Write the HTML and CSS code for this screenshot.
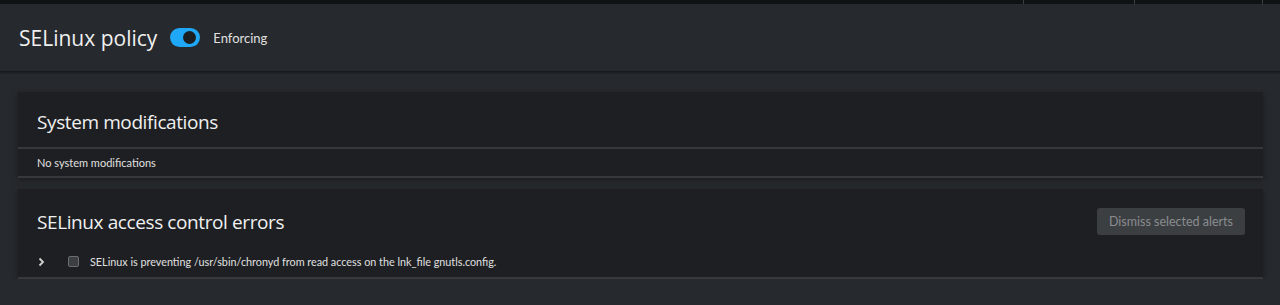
FILE: index.html
```html
<!DOCTYPE html>
<html lang="en">
<head>
  <meta charset="UTF-8" />
  <title>SELinux</title>
  <link rel="stylesheet" href="styles.css">
</head>
<body>

  <div class="topbar">
    <div class="top-fill"></div>
    <div class="top-item w110"></div>
    <div class="top-item w128"></div>
    <div class="top-item w18"></div>
  </div>

  <header class="page-header">
    <h1>SELinux policy</h1>
    <span class="switch"><span class="knob"></span></span>
    <span class="switch-label">Enforcing</span>
  </header>

  <main class="content">
    <section class="card">
      <div class="card-head bordered">
        <h2>System modifications</h2>
      </div>
      <div class="row plain">No system modifications</div>
    </section>

    <section class="card">
      <div class="card-head tall">
        <h2>SELinux access control errors</h2>
        <button class="btn-dismiss">Dismiss selected alerts</button>
      </div>
      <div class="row alert-row">
        <svg class="chevron" width="8" height="10" viewBox="0 0 8 10">
          <path d="M2.5 1.5 L6 5 L2.5 8.5" fill="none" stroke="#d2d2d2" stroke-width="1.8" />
        </svg>
        <span class="check"></span>
        <span class="alert-text">SELinux is preventing /usr/sbin/chronyd from read access on the lnk_file gnutls.config.</span>
      </div>
    </section>
  </main>

</body>
</html>
```

FILE: styles.css
```css
body { margin: 0; background-color: #26292d; color: #e0e0e0; font-family: "Open Sans", "Noto Sans", sans-serif; }

.topbar { display: flex; height: 4px; background-color: #0f1214; }
.top-fill { flex: 1; }
.top-item { border-left: 1px solid #3c3f42; }
.w110 { width: 110px; }
.w128 { width: 127px; }
.w18 { width: 17px; }

.page-header {
  display: flex; align-items: center; height: 67px; padding: 0 19px;
  background-color: #26292d; border-bottom: 1px solid #17191c;
  box-shadow: 0 1px 2px rgba(0, 0, 0, 0.35);
}
.page-header h1 { margin: 0; font-size: 21px; font-weight: 400; color: #f0f0f0; }
.switch {
  position: relative; display: inline-block; width: 30px; height: 19px; margin-left: 13px;
  background-color: #1fa7f8; border-radius: 10px;
}
.knob {
  position: absolute; top: 3px; right: 4px; width: 13px; height: 13px;
  border-radius: 50%; background-color: #1b1d21;
}
.switch-label { margin-left: 13px; font-family: Lato, sans-serif; font-size: 13px; color: #e0e0e0; }

.content { padding: 20px 17px 0 18px; display: flex; flex-direction: column; gap: 11px; }
.card { background-color: #1e1f22; box-shadow: 0 2px 6px rgba(0, 0, 0, 0.35); }
.card-head {
  display: flex; justify-content: space-between; align-items: center;
  height: 57px; padding: 4px 18px 0 19px; box-sizing: border-box;
}
.card-head.tall { padding-top: 8px; }
.card-head h2 { margin: 0; font-size: 19px; font-weight: 400; color: #f0f0f0; letter-spacing: -0.4px; }
.bordered { border-bottom: 2px solid #36383c; }

.row { display: flex; align-items: center; border-bottom: 2px solid #36383c; font-family: Lato, sans-serif; font-size: 11px; color: #e0e0e0; }
.plain { height: 27px; padding-left: 19px; }
.alert-row { height: 31px; padding-left: 19px; font-size: 10.8px; }

.btn-dismiss {
  height: 27px; padding: 0 12px; border: none; border-radius: 3px;
  background-color: #3c3f42; color: #8a8d90; font-family: Lato, sans-serif; font-size: 12.5px;
}
.chevron { margin-right: 23px; }
.check {
  width: 9px; height: 9px; margin-right: 11px;
  background-color: #3c3f42; border: 1px solid #6a6e73; border-radius: 2px;
}
```
